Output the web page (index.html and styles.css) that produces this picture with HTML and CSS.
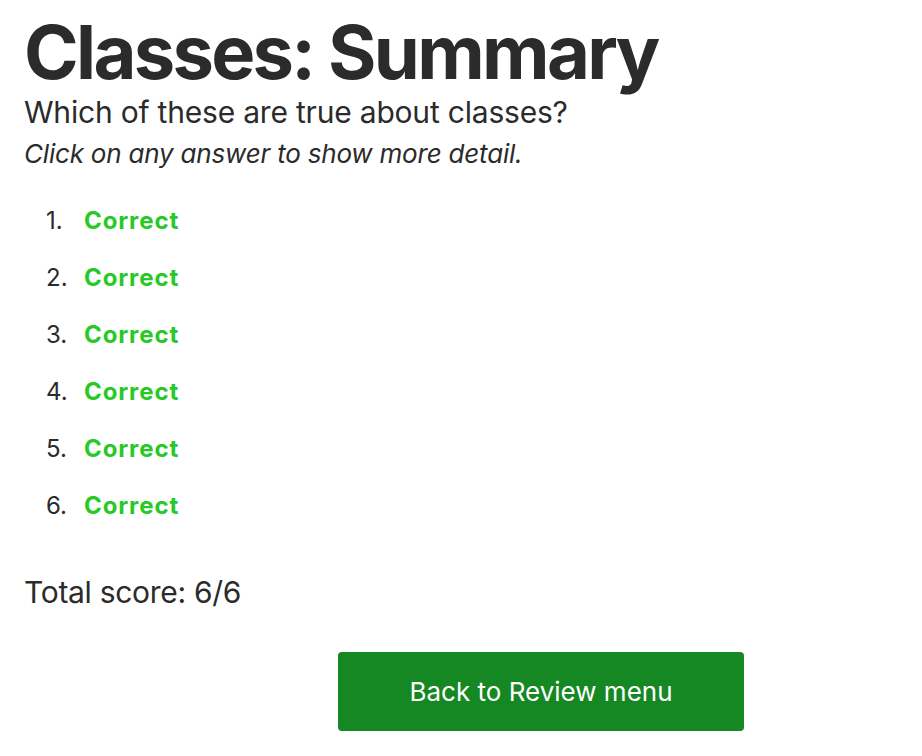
FILE: index.html
```html
<!DOCTYPE html>
<html lang="en">
<head>
<meta charset="utf-8">
<title>Classes: Summary</title>
<link rel="stylesheet" href="styles.css">
</head>
<body>
<main class="page">
  <h1 class="title">Classes: Summary</h1>
  <p class="question">Which of these are true about classes?</p>
  <p class="hint">Click on any answer to show more detail.</p>
  <ol class="answers">
    <li class="answer"><span class="num">1.</span><span class="correct">Correct</span></li>
    <li class="answer"><span class="num">2.</span><span class="correct">Correct</span></li>
    <li class="answer"><span class="num">3.</span><span class="correct">Correct</span></li>
    <li class="answer"><span class="num">4.</span><span class="correct">Correct</span></li>
    <li class="answer"><span class="num">5.</span><span class="correct">Correct</span></li>
    <li class="answer"><span class="num">6.</span><span class="correct">Correct</span></li>
  </ol>
  <p class="score">Total score: 6/6</p>
  <div class="actions">
    <button class="back-btn" type="button">Back to Review menu</button>
  </div>
</main>
</body>
</html>
```

FILE: styles.css
```css
html, body {
  margin: 0;
  padding: 0;
  background: #ffffff;
}
body {
  font-family: Inter, "Noto Sans", "Liberation Sans", sans-serif;
  color: #2b2b2b;
}
.page {
  padding: 12px 24px 0 24px;
}
.title {
  margin: 0;
  font-size: 74px;
  font-weight: 700;
  line-height: 80px;
  letter-spacing: -2.7px;
}
.question {
  margin: 2px 0 0 0;
  font-size: 30px;
  line-height: 36px;
  letter-spacing: -0.2px;
}
.hint {
  margin: 8px 0 0 0;
  font-size: 26px;
  font-style: italic;
  line-height: 32px;
  letter-spacing: -0.2px;
}
.answers {
  list-style: none;
  margin: 22px 0 0 0;
  padding: 0;
  font-size: 24px;
  line-height: 57px;
}
.answer {
  display: flex;
}
.num {
  width: 38px;
  padding-left: 22px;
  box-sizing: content-box;
}
.correct {
  color: #27c927;
  font-weight: 700;
  letter-spacing: 0.9px;
}
.score {
  margin: 40px 0 0 0;
  font-size: 30px;
  line-height: 36px;
  letter-spacing: -0.3px;
}
.actions {
  display: flex;
  margin-top: 42px;
  padding-left: 314px;
}
.back-btn {
  width: 406px;
  height: 79px;
  background: #158723;
  color: #ffffff;
  border: none;
  border-radius: 4px;
  font-family: inherit;
  font-size: 26px;
  padding: 0;
}
```
